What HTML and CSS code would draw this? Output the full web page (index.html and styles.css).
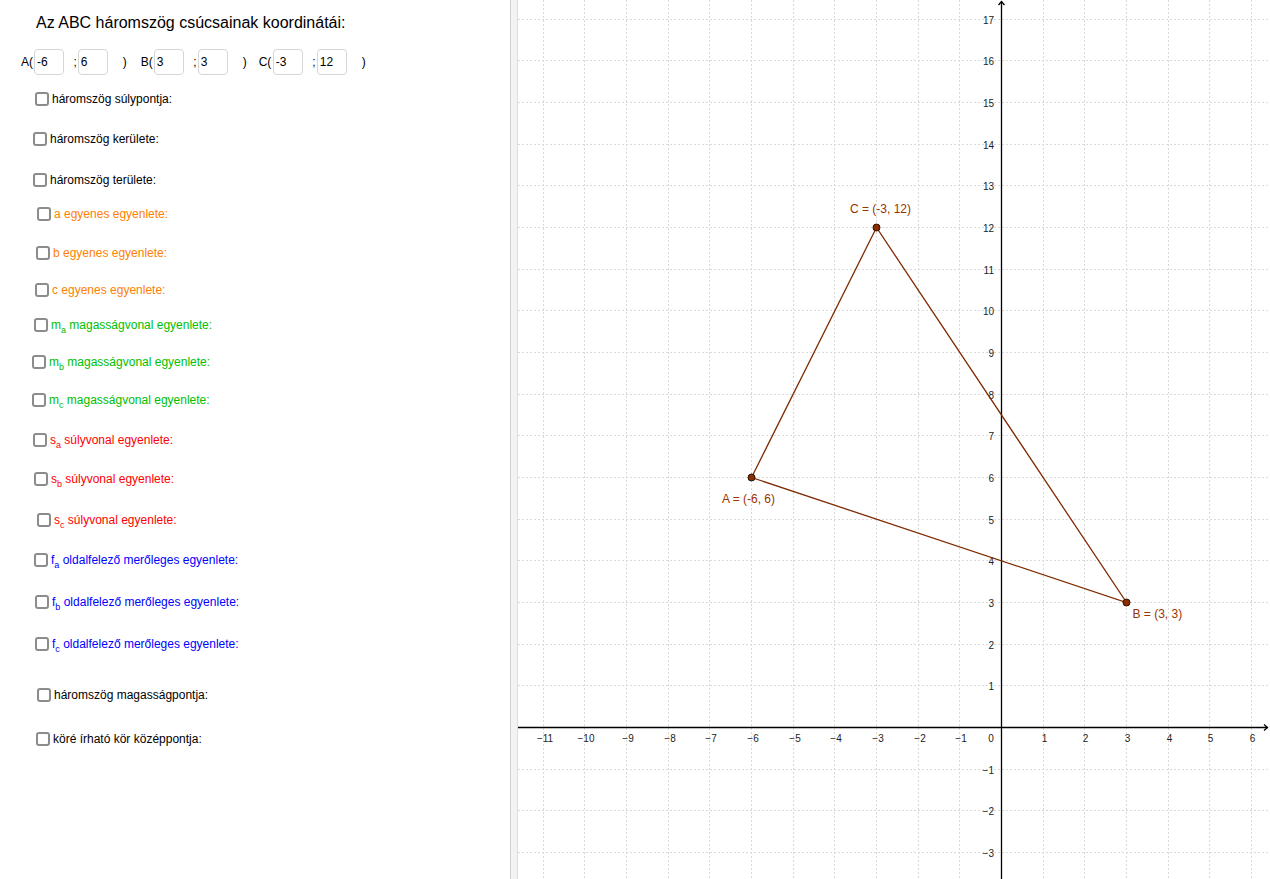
FILE: index.html
```html
<!DOCTYPE html>
<html lang="hu">
<head>
<meta charset="utf-8">
<title>ABC háromszög</title>
<link rel="stylesheet" href="styles.css">
</head>
<body>
<div class="app">
  <div class="panel">
    <h1 class="title">Az ABC háromszög csúcsainak koordinátái:</h1>
    <div class="coords">
      <span class="lbl">A(</span><input class="fld" type="text" value="-6"><span class="semi">;</span><input class="fld" type="text" value="6"><span class="close">)</span>
      <span class="lbl lbl-b">B(</span><input class="fld" type="text" value="3"><span class="semi">;</span><input class="fld" type="text" value="3"><span class="close">)</span>
      <span class="lbl lbl-c">C(</span><input class="fld fld-c" type="text" value="-3"><span class="semi">;</span><input class="fld" type="text" value="12"><span class="close">)</span>
    </div>
    <div class="opts">
      <div class="opt black"><span class="cb"></span><span class="txt">háromszög súlypontja:</span></div>
      <div class="opt black"><span class="cb"></span><span class="txt">háromszög kerülete:</span></div>
      <div class="opt black"><span class="cb"></span><span class="txt">háromszög területe:</span></div>
      <div class="opt orange"><span class="cb"></span><span class="txt">a egyenes egyenlete:</span></div>
      <div class="opt orange"><span class="cb"></span><span class="txt">b egyenes egyenlete:</span></div>
      <div class="opt orange"><span class="cb"></span><span class="txt">c egyenes egyenlete:</span></div>
      <div class="opt green"><span class="cb"></span><span class="txt">m<sub>a</sub> magasságvonal egyenlete:</span></div>
      <div class="opt green"><span class="cb"></span><span class="txt">m<sub>b</sub> magasságvonal egyenlete:</span></div>
      <div class="opt green"><span class="cb"></span><span class="txt">m<sub>c</sub> magasságvonal egyenlete:</span></div>
      <div class="opt red"><span class="cb"></span><span class="txt">s<sub>a</sub> súlyvonal egyenlete:</span></div>
      <div class="opt red"><span class="cb"></span><span class="txt">s<sub>b</sub> súlyvonal egyenlete:</span></div>
      <div class="opt red"><span class="cb"></span><span class="txt">s<sub>c</sub> súlyvonal egyenlete:</span></div>
      <div class="opt blue"><span class="cb"></span><span class="txt">f<sub>a</sub> oldalfelező merőleges egyenlete:</span></div>
      <div class="opt blue"><span class="cb"></span><span class="txt">f<sub>b</sub> oldalfelező merőleges egyenlete:</span></div>
      <div class="opt blue"><span class="cb"></span><span class="txt">f<sub>c</sub> oldalfelező merőleges egyenlete:</span></div>
      <div class="opt black"><span class="cb"></span><span class="txt">háromszög magasságpontja:</span></div>
      <div class="opt black"><span class="cb"></span><span class="txt">köré írható kör középpontja:</span></div>
    </div>
  </div>
  <div class="divider"></div>
  <div class="graphics">
    <svg class="plot" width="752" height="879" viewBox="0 0 752 879" xmlns="http://www.w3.org/2000/svg">
      <g class="grid">
        <line x1="25.5" y1="0" x2="25.5" y2="879"/>
        <line x1="66.5" y1="0" x2="66.5" y2="879"/>
        <line x1="108.5" y1="0" x2="108.5" y2="879"/>
        <line x1="150.5" y1="0" x2="150.5" y2="879"/>
        <line x1="191.5" y1="0" x2="191.5" y2="879"/>
        <line x1="233.5" y1="0" x2="233.5" y2="879"/>
        <line x1="275.5" y1="0" x2="275.5" y2="879"/>
        <line x1="316.5" y1="0" x2="316.5" y2="879"/>
        <line x1="358.5" y1="0" x2="358.5" y2="879"/>
        <line x1="400.5" y1="0" x2="400.5" y2="879"/>
        <line x1="441.5" y1="0" x2="441.5" y2="879"/>
        <line x1="525.5" y1="0" x2="525.5" y2="879"/>
        <line x1="566.5" y1="0" x2="566.5" y2="879"/>
        <line x1="608.5" y1="0" x2="608.5" y2="879"/>
        <line x1="650.5" y1="0" x2="650.5" y2="879"/>
        <line x1="691.5" y1="0" x2="691.5" y2="879"/>
        <line x1="733.5" y1="0" x2="733.5" y2="879"/>
        <line x1="0" y1="19.5" x2="752" y2="19.5"/>
        <line x1="0" y1="60.5" x2="752" y2="60.5"/>
        <line x1="0" y1="102.5" x2="752" y2="102.5"/>
        <line x1="0" y1="144.5" x2="752" y2="144.5"/>
        <line x1="0" y1="185.5" x2="752" y2="185.5"/>
        <line x1="0" y1="227.5" x2="752" y2="227.5"/>
        <line x1="0" y1="269.5" x2="752" y2="269.5"/>
        <line x1="0" y1="310.5" x2="752" y2="310.5"/>
        <line x1="0" y1="352.5" x2="752" y2="352.5"/>
        <line x1="0" y1="394.5" x2="752" y2="394.5"/>
        <line x1="0" y1="435.5" x2="752" y2="435.5"/>
        <line x1="0" y1="477.5" x2="752" y2="477.5"/>
        <line x1="0" y1="519.5" x2="752" y2="519.5"/>
        <line x1="0" y1="560.5" x2="752" y2="560.5"/>
        <line x1="0" y1="602.5" x2="752" y2="602.5"/>
        <line x1="0" y1="644.5" x2="752" y2="644.5"/>
        <line x1="0" y1="685.5" x2="752" y2="685.5"/>
        <line x1="0" y1="769.5" x2="752" y2="769.5"/>
        <line x1="0" y1="810.5" x2="752" y2="810.5"/>
        <line x1="0" y1="852.5" x2="752" y2="852.5"/>
      </g>
      <g class="axes">
        <line x1="0" y1="727.5" x2="749.5" y2="727.5"/>
        <line x1="483.5" y1="1.5" x2="483.5" y2="879"/>
        <polyline points="480.5,5 483.5,1.5 486.5,5"/>
        <polyline points="746,724.5 749.5,727.5 746,730.5"/>
      </g>
      <g class="xlabels">
        <text x="27" y="741.5">−11</text>
        <text x="68" y="741.5">−10</text>
        <text x="110" y="741.5">−9</text>
        <text x="152" y="741.5">−8</text>
        <text x="193" y="741.5">−7</text>
        <text x="235" y="741.5">−6</text>
        <text x="277" y="741.5">−5</text>
        <text x="318" y="741.5">−4</text>
        <text x="360" y="741.5">−3</text>
        <text x="402" y="741.5">−2</text>
        <text x="443" y="741.5">−1</text>
        <text x="473" y="741.5">0</text>
        <text x="526.5" y="741.5">1</text>
        <text x="567.5" y="741.5">2</text>
        <text x="609.5" y="741.5">3</text>
        <text x="651.5" y="741.5">4</text>
        <text x="692.5" y="741.5">5</text>
        <text x="734.5" y="741.5">6</text>
      </g>
      <g class="ylabels">
        <text x="476" y="24">17</text>
        <text x="476" y="65">16</text>
        <text x="476" y="107">15</text>
        <text x="476" y="149">14</text>
        <text x="476" y="190">13</text>
        <text x="476" y="232">12</text>
        <text x="476" y="274">11</text>
        <text x="476" y="315">10</text>
        <text x="476" y="357">9</text>
        <text x="476" y="399">8</text>
        <text x="476" y="440">7</text>
        <text x="476" y="482">6</text>
        <text x="476" y="524">5</text>
        <text x="476" y="565">4</text>
        <text x="476" y="607">3</text>
        <text x="476" y="649">2</text>
        <text x="476" y="690">1</text>
        <text x="476" y="773.5">−1</text>
        <text x="476" y="815">−2</text>
        <text x="476" y="857">−3</text>
      </g>
      <polygon class="tri" points="233.5,477.5 608.5,602.5 358.5,227.5"/>
      <g class="pts">
        <circle cx="233.5" cy="477.5" r="3.5"/>
        <circle cx="608.5" cy="602.5" r="3.5"/>
        <circle cx="358.5" cy="227.5" r="3.5"/>
      </g>
      <g class="ptlabels">
        <text x="332" y="213">C = (-3, 12)</text>
        <text x="204" y="503">A = (-6, 6)</text>
        <text x="614.5" y="617.5">B = (3, 3)</text>
      </g>
    </svg>
  </div>
</div>
</body>
</html>
```

FILE: styles.css
```css
* {
  box-sizing: border-box;
}

html, body {
  margin: 0;
  padding: 0;
  background: #ffffff;
}

body {
  font-family: "Liberation Sans", Arial, sans-serif;
  color: #000;
}

.app {
  display: flex;
  width: 1270px;
  height: 879px;
  overflow: hidden;
}

/* ---------- left panel ---------- */
.panel {
  width: 510px;
  flex: 0 0 510px;
  height: 879px;
  background: #fff;
}

.title {
  margin: 0;
  padding: 13px 0 0 36px;
  font-size: 16px;
  line-height: 20px;
  font-weight: normal;
}

.coords {
  display: flex;
  align-items: center;
  height: 26px;
  margin-top: 16px;
  padding-left: 21px;
  font-size: 12px;
}

.lbl {
  margin-right: 1px;
}

.lbl-b {
  margin-left: 14px;
}

.lbl-c {
  margin-left: 12px;
}

.fld {
  width: 30px;
  height: 26px;
  margin: 0;
  padding: 0 2px;
  border: 1px solid #d6d6d6;
  border-radius: 4px;
  font-family: "Liberation Sans", Arial, sans-serif;
  font-size: 12px;
  color: #000;
  background: #fff;
  outline: none;
}

.fld-c {
  margin-left: 0.5px;
}

.semi {
  margin: 0 1px 0 9.5px;
}

.close {
  margin-left: 15px;
}

/* ---------- checkbox list ---------- */
.opts {
  display: flex;
  flex-direction: column;
}

.opt {
  display: flex;
  align-items: center;
  height: 14px;
  font-size: 12px;
  line-height: 14px;
  white-space: nowrap;
}

.cb {
  display: block;
  width: 14px;
  height: 14px;
  flex: 0 0 14px;
  border: 2px solid #8c8c8c;
  border-radius: 3px;
  background: #fff;
  margin-right: 3px;
}

.txt sub {
  font-size: 9px;
  line-height: 0;
  vertical-align: -4px;
}

.black  { color: #000000; }
.orange { color: #ff7f00; }
.green  { color: #00c000; }
.red    { color: #ff0000; }
.blue   { color: #0000ff; }

.opt:nth-child(1)  { margin-top: 17px; padding-left: 35px; }
.opt:nth-child(2)  { margin-top: 26px; padding-left: 33px; }
.opt:nth-child(3)  { margin-top: 27px; padding-left: 33px; }
.opt:nth-child(4)  { margin-top: 20px; padding-left: 37px; }
.opt:nth-child(5)  { margin-top: 25px; padding-left: 36px; }
.opt:nth-child(6)  { margin-top: 23px; padding-left: 35px; }
.opt:nth-child(7)  { margin-top: 21px; padding-left: 34px; }
.opt:nth-child(8)  { margin-top: 23px; padding-left: 32px; }
.opt:nth-child(9)  { margin-top: 24px; padding-left: 32px; }
.opt:nth-child(10) { margin-top: 26px; padding-left: 33px; }
.opt:nth-child(11) { margin-top: 25px; padding-left: 34px; }
.opt:nth-child(12) { margin-top: 27px; padding-left: 37px; }
.opt:nth-child(13) { margin-top: 26px; padding-left: 34px; }
.opt:nth-child(14) { margin-top: 28px; padding-left: 35px; }
.opt:nth-child(15) { margin-top: 28px; padding-left: 35px; }
.opt:nth-child(16) { margin-top: 37px; padding-left: 37px; }
.opt:nth-child(17) { margin-top: 30px; padding-left: 36px; }

/* ---------- divider ---------- */
.divider {
  flex: 0 0 8px;
  width: 8px;
  height: 879px;
  background: #f3f3f3;
  border-left: 1px solid #cfcfcf;
  border-right: 1px solid #dedede;
}

/* ---------- graphics view ---------- */
.graphics {
  flex: 1 1 auto;
  height: 879px;
  background: #fff;
}

.plot {
  display: block;
}

.grid line {
  stroke: #dadada;
  stroke-width: 1;
  stroke-dasharray: 2 2;
}

.axes line,
.axes polyline {
  stroke: #000;
  stroke-width: 1.3;
  fill: none;
}

.xlabels text,
.ylabels text {
  font-family: "Liberation Sans", Arial, sans-serif;
  font-size: 10px;
  fill: #222;
}

.xlabels text {
  text-anchor: middle;
}

.ylabels text {
  text-anchor: end;
}

.tri {
  fill: none;
  stroke: #7f2a00;
  stroke-width: 1.3;
}

.pts circle {
  fill: #8a2e00;
  stroke: #2a1205;
  stroke-width: 1;
}

.ptlabels text {
  font-family: "Liberation Sans", Arial, sans-serif;
  font-size: 12px;
  fill: #993300;
}
```
